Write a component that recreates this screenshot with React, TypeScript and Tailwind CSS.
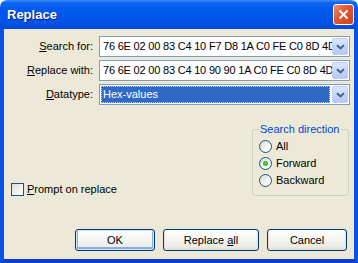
const ui = { fontFamily: '"Liberation Sans", Arial, sans-serif' };

function ComboArrow() {
  return (
    <div className="flex h-full w-[16px] shrink-0 items-center justify-center rounded-[2px] border border-[#B9CDF8] bg-[linear-gradient(to_bottom,#DCE7FD,#C1D3FB_60%,#B3C8F8)]">
      <svg width="9" height="6" viewBox="0 0 9 6">
        <path d="M1 1.2 L4.5 4.5 L8 1.2" fill="none" stroke="#4D6185" strokeWidth="2" />
      </svg>
    </div>
  );
}

function HexCombo({ value }: { value: string }) {
  return (
    <div className="flex h-[21px] w-[251px] items-stretch border border-[#7F9DB9] bg-white p-[1px]">
      <div className="flex min-w-0 flex-1 items-center overflow-hidden whitespace-nowrap pl-[2px] text-[11px] tracking-[-0.2px] text-black">
        {value}
      </div>
      <ComboArrow />
    </div>
  );
}

function Radio({ label, checked }: { label: string; checked?: boolean }) {
  return (
    <div className="flex h-[17px] items-center">
      <div className="flex h-[13px] w-[13px] items-center justify-center rounded-full border border-[#1C5180] bg-[linear-gradient(135deg,#DCD9CC,#F6F5F0_60%,#FFFFFF)]">
        {checked && <div className="h-[5px] w-[5px] rounded-full bg-[radial-gradient(circle,#5BD35B,#21A121)]" />}
      </div>
      <span className="ml-[4px] text-[11px] leading-[13px] text-black">{label}</span>
    </div>
  );
}

function XpButton({ children, width, isDefault }: { children: React.ReactNode; width: string; isDefault?: boolean }) {
  return (
    <button
      className={`h-[22px] ${width} rounded-[3px] border border-[#003C74] bg-[linear-gradient(to_bottom,#FFFFFF,#F4F4F0_50%,#ECEBE6_85%,#D6D0C5)] text-[11px] text-black ${
        isDefault
          ? 'shadow-[inset_0_0_0_1px_#CEE7FF,inset_0_-1px_0_2px_#89ADE4]'
          : 'shadow-[inset_0_-1px_0_1px_#E3E0D6]'
      }`}
    >
      {children}
    </button>
  );
}

export default function App() {
  const hex1 = '76 6E 02 00 83 C4 10 F7 D8 1A C0 FE C0 8D 4D';
  const hex2 = '76 6E 02 00 83 C4 10 90 90 1A C0 FE C0 8D 4D';

  return (
    <div className="h-[263px] w-[358px] bg-white" style={ui}>
      <div className="flex h-[263px] w-[358px] flex-col overflow-hidden rounded-t-[7px]">
        {/* Title bar */}
        <div className="flex h-[29px] shrink-0 items-center justify-between bg-[linear-gradient(to_bottom,#3D8EF8_0%,#0E64F0_10%,#0058EE_35%,#0055E8_75%,#0049DA_100%)] pl-[7px] pr-[4px]">
          <span className="text-[13px] font-bold text-white [text-shadow:1px_1px_0_#0A1883]">Replace</span>
          <div className="flex h-[21px] w-[21px] items-center justify-center rounded-[3px] border border-white bg-[linear-gradient(135deg,#EB8E72,#E2562E_45%,#C9431B)]">
            <svg width="11" height="11" viewBox="0 0 11 11">
              <path d="M1.5 1.5 L9.5 9.5 M9.5 1.5 L1.5 9.5" stroke="#FFFFFF" strokeWidth="2" />
            </svg>
          </div>
        </div>

        {/* Client area */}
        <div className="flex flex-1 flex-col border-x-4 border-b-4 border-x-[#0854E6] border-b-[#0A3FD0] bg-[#ECE9D8]">
          <div className="flex flex-col gap-[3px] pt-[7px]">
            <div className="flex items-center">
              <span className="w-[89px] text-right text-[11px] text-black">
                <u>S</u>earch for:
              </span>
              <div className="ml-[6px]">
                <HexCombo value={hex1} />
              </div>
            </div>
            <div className="flex items-center">
              <span className="w-[89px] text-right text-[11px] text-black">
                <u>R</u>eplace with:
              </span>
              <div className="ml-[6px]">
                <HexCombo value={hex2} />
              </div>
            </div>
            <div className="flex items-center">
              <span className="w-[89px] text-right text-[11px] text-black">
                <u>D</u>atatype:
              </span>
              <div className="ml-[6px] flex h-[21px] w-[251px] items-stretch border border-[#7F9DB9] bg-white p-[1px]">
                <div className="mr-[2px] flex flex-1 items-center border border-dotted border-[#E8D28C] bg-[#316AC5] pl-[1px] text-[11px] text-white">
                  Hex-values
                </div>
                <ComboArrow />
              </div>
            </div>
          </div>

          <div className="mt-[18px] flex items-end justify-between">
            <label className="ml-[7px] flex items-center">
              <div className="h-[13px] w-[13px] border border-[#1C5180] bg-[linear-gradient(135deg,#DCDCD7,#F4F4F0_60%,#FFFFFF)]" />
              <span className="ml-[3px] text-[11px] leading-[13px] text-black">
                <u>P</u>rompt on replace
              </span>
            </label>

            <fieldset className="mr-[5px] w-[97px] rounded-[3px] border border-[#D0D0BF] pb-[6px] pl-[6px]">
              <legend className="px-[1px] text-[11px] leading-[13px] text-[#0046D5]">Search direction</legend>
              <div className="flex flex-col pt-[2px]">
                <Radio label="All" />
                <Radio label="Forward" checked />
                <Radio label="Backward" />
              </div>
            </fieldset>
          </div>

          <div className="mt-auto flex justify-end gap-[8px] pb-[8px] pr-[7px]">
            <XpButton width="w-[80px]" isDefault>
              OK
            </XpButton>
            <XpButton width="w-[96px]">
              Replace <u>a</u>ll
            </XpButton>
            <XpButton width="w-[80px]">Cancel</XpButton>
          </div>
        </div>
      </div>
    </div>
  );
}
